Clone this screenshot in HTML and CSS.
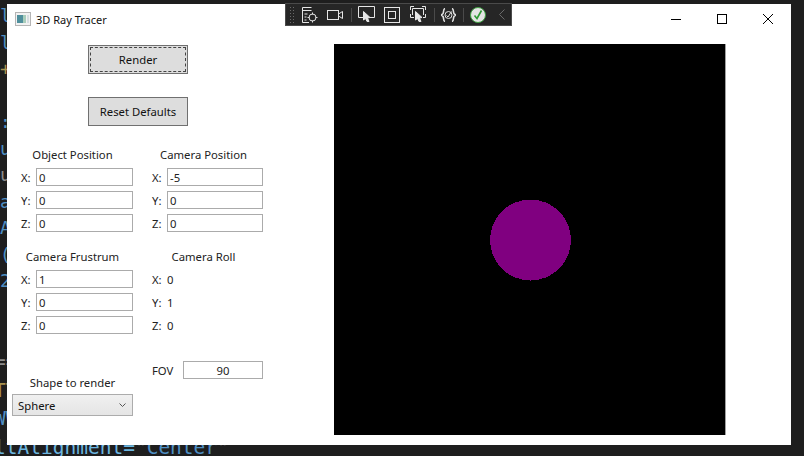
FILE: index.html
```html
<!DOCTYPE html>
<html lang="en">
<head>
  <meta charset="UTF-8">
  <meta name="viewport" content="width=device-width, initial-scale=1.0">
  <title>3D Ray Tracer</title>
  <link rel="stylesheet" href="styles.css">
</head>
<body>
  <!-- Editor behind the app window -->
  <pre class="code code-top"><span class="blue">ll</span>
<span class="blue">ll</span>
<span class="gold">+f</span>

<span class="blue">:l</span>
<span class="blue">ul</span>
<span class="grey">u=</span>
<span class="blue">ai</span>
<span class="blue">Al</span>
<span class="blue">(0</span>
<span class="blue">2</span></pre>
  <pre class="code code-bottom"><span class="grey">==</span>
<span class="gold">TT</span>
<span class="blue">WW</span>
<span class="cyan">ltAlignment=</span><span class="grey">"</span><span class="blue">Center</span><span class="grey">"</span></pre>

  <div class="window">
    <div class="titlebar">
      <svg class="app-icon" width="16" height="14" viewBox="0 0 16 14">
        <rect x="0.5" y="0.5" width="15" height="13" fill="#f2f2f2" stroke="#b5b5b5"/>
        <rect x="2" y="3" width="6" height="8" fill="#4f8f9c"/>
        <rect x="8" y="3" width="3" height="8" fill="#a9cdbb"/>
        <rect x="12" y="3" width="2" height="8" fill="#d5dde0"/>
      </svg>
      <span class="title">3D Ray Tracer</span>
      <div class="caption">
        <svg width="46" height="12" viewBox="0 0 46 12"><path d="M18 6.5h10" stroke="#000" fill="none"/></svg>
        <svg width="46" height="12" viewBox="0 0 46 12"><rect x="18.5" y="1.5" width="9" height="9" stroke="#000" fill="none"/></svg>
        <svg width="46" height="12" viewBox="0 0 46 12"><path d="M18 1l10 10M28 1L18 11" stroke="#000" fill="none"/></svg>
      </div>
    </div>

    <div class="content">
      <div class="panel">
        <button class="btn btn-focus"><span>Render</span></button>
        <button class="btn btn-reset">Reset Defaults</button>

        <div class="groups">
          <div class="group">
            <div class="group-title">Object Position</div>
            <div class="row"><label>X:</label><input type="text" value="0"></div>
            <div class="row"><label>Y:</label><input type="text" value="0"></div>
            <div class="row"><label>Z:</label><input type="text" value="0"></div>
          </div>
          <div class="group">
            <div class="group-title">Camera Position</div>
            <div class="row"><label>X:</label><input type="text" value="-5"></div>
            <div class="row"><label>Y:</label><input type="text" value="0"></div>
            <div class="row"><label>Z:</label><input type="text" value="0"></div>
          </div>
          <div class="group">
            <div class="group-title">Camera Frustrum</div>
            <div class="row"><label>X:</label><input type="text" value="1"></div>
            <div class="row"><label>Y:</label><input type="text" value="0"></div>
            <div class="row row-last"><label>Z:</label><input type="text" value="0"></div>
          </div>
          <div class="group">
            <div class="group-title">Camera Roll</div>
            <div class="row"><label>X:</label><span class="val">0</span></div>
            <div class="row"><label>Y:</label><span class="val">1</span></div>
            <div class="row row-last"><label>Z:</label><span class="val">0</span></div>
          </div>
          <div class="group shape">
            <div class="shape-title">Shape to render</div>
            <div class="select">Sphere
              <svg width="7" height="5" viewBox="0 0 7 5"><path d="M0.5 0.5L3.5 3.5l3-3" stroke="#555" fill="none"/></svg>
            </div>
          </div>
          <div class="group fov">
            <label>FOV</label>
            <input class="fov-input" type="text" value="90">
          </div>
        </div>
      </div>

      <div class="viewport">
        <svg class="scene" width="391" height="391" viewBox="0 0 391 391">
          <circle cx="196.500" cy="196" r="40.500" fill="#800080" shape-rendering="crispEdges"/>
        </svg>
      </div>
    </div>
  </div>

  <!-- Debug toolbar floating over the window -->
  <div class="toolbar">
    <div class="grip"></div>
    <svg class="tb-icon icon-first" width="17" height="18" viewBox="0 0 17 18" fill="none" stroke="#e6e6e6">
      <path d="M10.5 1.5H1.5V16.5H8M1.5 4.5h9M3.500 8h3M3.500 11h2M3.500 14h2"/>
      <circle cx="11.500" cy="11.500" r="3.500"/>
      <path d="M11.500 6.500v2M11.500 14.500v2M6.500 11.500h2M14.500 11.500h2"/>
    </svg>
    <svg class="tb-icon icon-cam" width="17" height="12" viewBox="0 0 17 12" fill="none" stroke="#e6e6e6">
      <rect x="0.500" y="1.500" width="11" height="9"/>
      <path d="M11.500 5L15.500 2.500V9.500L11.500 7"/>
    </svg>
    <i class="sep sep-a"></i>
    <svg class="tb-icon icon-sel" width="17" height="17" viewBox="0 0 17 17" fill="none" stroke="#e6e6e6">
      <path d="M5 11.500H0.500V0.500H16.500V11.500H12"/>
      <path d="M5.500 5.500L12 11.500L9.500 12L11 15.500H9L7.500 12.500L5.500 14Z" fill="#e6e6e6"/>
    </svg>
    <svg class="tb-icon icon-box" width="16" height="16" viewBox="0 0 16 16" fill="none" stroke="#e6e6e6">
      <rect x="0.500" y="0.500" width="15" height="15"/>
      <rect x="4.500" y="4.500" width="7" height="7"/>
    </svg>
    <svg class="tb-icon icon-frame" width="16" height="17" viewBox="0 0 16 17" fill="none" stroke="#e6e6e6">
      <path d="M0.500 4V0.500H4M12 0.500H15.500V4M15.500 8V11.500H13M0.500 8V11.500H4M2.500 9V2.500H13.500V9"/>
      <path d="M5.500 5.500L12 11.500L9.500 12L11 15.500H9L7.500 12.500L5.500 14Z" fill="#e6e6e6"/>
    </svg>
    <i class="sep sep-b"></i>
    <svg class="tb-icon icon-hot" width="15" height="14" viewBox="0 0 15 14" fill="none" stroke="#e0e0e0">
      <path d="M4 0.500C2 1 3 4 2 5.500L0.500 7L2 8.500C3 10 2 13 4 13.500M11 0.500C13 1 12 4 13 5.500L14.500 7L13 8.500C12 10 13 13 11 13.500" stroke-width="1.600"/>
      <circle cx="7.500" cy="7" r="3.500"/>
      <path d="M5.500 7.500L7 9L10.500 3.500"/>
    </svg>
    <i class="sep sep-c"></i>
    <svg class="tb-icon icon-ok" width="16" height="16" viewBox="0 0 16 16">
      <circle cx="8" cy="8" r="7.500" fill="#e4e4e4" stroke="#3fa142"/>
      <path d="M4.500 8.500L7 11.500L11.500 3.500" fill="none" stroke="#2f9a35" stroke-width="1.600"/>
    </svg>
    <svg class="tb-icon icon-chev" width="6" height="11" viewBox="0 0 6 11" fill="none" stroke="#6a6a6a">
      <path d="M5.500 0.500L0.500 5.500L5.500 10.500"/>
    </svg>
  </div>
</body>
</html>
```

FILE: styles.css
```css
html, body {
  margin: 0;
  padding: 0;
}

body {
  position: relative;
  width: 804px;
  height: 456px;
  overflow: hidden;
  background-color: #1e1e1e;
  font-family: "Noto Sans", sans-serif;
  font-size: 11.300px;
  color: #222;
}

.code {
  position: absolute;
  margin: 0;
  font-family: "DejaVu Sans Mono", monospace;
}

.code-top {
  left: 0;
  top: 3px;
  font-size: 18px;
  line-height: 26.500px;
}

.code-bottom {
  left: -6px;
  top: 348px;
  font-size: 19.500px;
  line-height: 28.500px;
}

.blue { color: #4f8fc4; }
.cyan { color: #6cb6e0; }
.gold { color: #a8924f; }
.grey { color: #8c8c8c; }

.window {
  position: absolute;
  left: 7px;
  top: 4px;
  width: 784px;
  height: 441px;
  background: #fff;
  display: flex;
  flex-direction: column;
}

.titlebar {
  display: flex;
  align-items: center;
  height: 30px;
  padding-left: 8px;
}

.app-icon {
  margin-right: 5px;
}

.title {
  font-size: 11px;
  color: #111;
}

.caption {
  margin-left: auto;
  display: flex;
}

.content {
  display: flex;
  flex: 1;
}

.panel {
  width: 327px;
}

.btn {
  display: block;
  width: 100px;
  height: 29px;
  margin-left: 81px;
  padding: 0;
  background-color: #dddddd;
  border: 1px solid #707070;
  font-family: inherit;
  font-size: 11.300px;
  color: #111;
}

.btn-focus {
  margin-top: 11px;
  padding: 1px;
}

.btn-focus span {
  display: block;
  height: 100%;
  box-sizing: border-box;
  line-height: 24px;
  border: 1px dashed #444;
}

.btn-reset {
  margin-top: 23px;
}

.groups {
  display: grid;
  grid-template-columns: 131px 131px;
  padding-left: 14px;
  margin-top: 20px;
}

.group-title {
  text-align: center;
  width: 103px;
  height: 22px;
  line-height: 18px;
}

.row {
  display: flex;
  align-items: center;
  height: 18px;
  margin-bottom: 5px;
}

.row label {
  width: 15px;
  color: #222;
}

.row input, .fov-input {
  box-sizing: border-box;
  width: 97px;
  height: 18px;
  padding: 0 2px;
  border: 1px solid #ababab;
  font-family: inherit;
  font-size: 11.300px;
  color: #222;
  outline: none;
}

.group:nth-child(even) .row input {
  width: 96px;
}

.row-last {
  margin-top: 1px;
}

.group:nth-child(3), .group:nth-child(4) {
  margin-top: 11px;
}

.shape {
  margin-top: 36px;
  margin-left: -9px;
}

.shape-title {
  width: 121px;
  text-align: center;
  height: 19px;
  line-height: 16px;
}

.select {
  box-sizing: border-box;
  display: flex;
  align-items: center;
  justify-content: space-between;
  width: 121px;
  height: 22px;
  padding: 0 6px 0 5px;
  border: 1px solid #acacac;
  background: linear-gradient(#f0f0f0, #e5e5e5);
  color: #111;
}

.fov {
  display: flex;
  align-items: center;
  justify-content: space-between;
  margin-top: 22px;
  height: 18px;
  width: 111px;
}

.fov-input {
  width: 80px;
  text-align: center;
}

.viewport {
  width: 391px;
  height: 391px;
  margin-top: 10px;
  background: #000;
  border-right: 1px solid #a0a0a0;
}

.scene {
  display: block;
}

.toolbar {
  position: absolute;
  left: 285px;
  top: 3px;
  width: 225px;
  height: 21px;
  display: flex;
  align-items: center;
  background: #262626;
  border: 1px solid #4a4a4a;
}

.grip {
  width: 5px;
  height: 17px;
  margin-left: 3px;
  background-image: radial-gradient(#6a6a6a 0.500px, transparent 0.700px);
  background-size: 3px 3px;
}

.tb-icon { flex: none; }
.icon-first { margin-left: 7px; }
.icon-cam { margin-left: 9px; }
.icon-sel { margin-left: 6px; }
.icon-box { margin-left: 9px; }
.icon-frame { margin-left: 10px; }
.icon-hot { margin-left: 6px; }
.icon-ok { margin-left: 6px; }
.icon-chev { margin-left: 13px; }

.sep {
  display: block;
  flex: none;
  width: 1px;
  height: 14px;
  background: #4a4a4a;
}

.sep-a { margin-left: 7px; }
.sep-b { margin-left: 8px; }
.sep-c { margin-left: 7px; }
```
